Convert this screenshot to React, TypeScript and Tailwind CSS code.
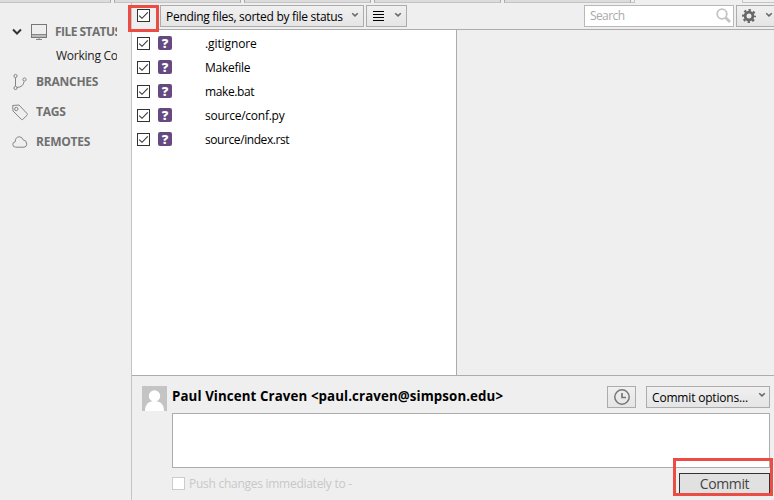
import React from "react";

const files = [
  { name: ".gitignore", tracking: "tracking-[-0.1px]" },
  { name: "Makefile", tracking: "tracking-[-0.25px]" },
  { name: "make.bat", tracking: "tracking-[-0.38px]" },
  { name: "source/conf.py", tracking: "tracking-[-0.25px]" },
  { name: "source/index.rst", tracking: "tracking-[-0.42px]" },
];

function Check() {
  return (
    <svg className="block h-[13px] w-[13px] shrink-0" viewBox="0 0 13 13">
      <rect x=".5" y=".5" width="12" height="12" fill="#fff" stroke="#333" />
      <path d="M2.2 6.6 5 9.3 10.8 3.4" fill="none" stroke="#333" strokeWidth="1.1" />
    </svg>
  );
}

function Chevron({ className = "" }: { className?: string }) {
  return (
    <svg className={`block h-[6px] w-[8px] shrink-0 ${className}`} viewBox="0 0 8 6">
      <path d="M1.2 1.2 4 3.9 6.8 1.2" fill="none" stroke="#686868" strokeWidth="1.5" />
    </svg>
  );
}

function TabStrip() {
  const tab = "h-[3px] border-b border-[#c4c4c4] bg-[#dcdcdc]";
  return (
    <div className="flex h-[3px] shrink-0">
      <div className={`${tab} w-[111px] border-r border-r-[#aaa]`} />
      <div className={`${tab} ml-[3px] w-[127px] border-x border-x-[#aaa]`} />
      <div className={`${tab} ml-[3px] w-[127px] border-x border-x-[#aaa]`} />
      <div className={`${tab} ml-[3px] w-[127px] border-x border-x-[#aaa]`} />
      <div className={`${tab} ml-[3px] w-[127px] border-x border-x-[#aaa]`} />
      <div className="h-[3px] w-[4px] border-b border-r border-[#c4c4c4]" />
      <div className="h-[3px] flex-1" />
      <div className="h-[3px] w-[32px] border-b border-l border-[#c4c4c4]" />
    </div>
  );
}

function Sidebar() {
  const label = "whitespace-nowrap text-[12px] font-bold leading-[16px] text-[#707070]";
  return (
    <div className="h-full w-[131px] shrink-0 overflow-hidden pt-[20px]">
      <div className="flex h-[17px] w-[117px] items-center overflow-hidden">
        <svg className="ml-[12px] h-[8px] w-[10px] shrink-0" viewBox="0 0 10 8">
          <path d="M1 1.5 5 5.5 9 1.5" fill="none" stroke="#333" strokeWidth="2" />
        </svg>
        <svg className="ml-[9px] h-[16px] w-[16px] shrink-0" viewBox="0 0 16 16">
          <rect x=".5" y=".5" width="15" height="13" fill="#eee" stroke="#777" />
          <path d="M1 11H15V13H1Z" fill="#bbb" />
          <path d="M1 10.5H15M5 15.5H11M8 13V15" stroke="#888" fill="none" />
        </svg>
        <span className={`${label} ml-[8px] tracking-[-0.55px]`}>FILE STATUS</span>
      </div>
      <div className="mt-[8px] h-[16px] w-[117px] overflow-hidden whitespace-nowrap pl-[56px] text-[12px] leading-[16px] tracking-[-0.25px] text-[#222]">Working Copy</div>
      <div className="mt-[8px] flex h-[20px] items-center">
        <svg className="ml-[12px] h-[18px] w-[16px] shrink-0" viewBox="0 0 16 18" fill="none" stroke="#858585">
          <circle cx="3.5" cy="3" r="1.6" /><circle cx="3.5" cy="15" r="1.6" /><circle cx="12.5" cy="6.5" r="1.6" />
          <path d="M3.5 5V13M5 14.5Q11.5 14 12 8.5" />
        </svg>
        <span className={`${label} ml-[8px] tracking-[-0.25px]`}>BRANCHES</span>
      </div>
      <div className="mt-[10px] flex h-[20px] items-center">
        <svg className="ml-[12px] h-[17px] w-[16px] shrink-0" viewBox="0 0 16 17" fill="none" stroke="#858585">
          <path d="M.7 1.5 7 1 15 9.5Q15.8 10.5 15 11.3L10.7 15.5Q10 16 9.2 15.2L1 7Z" /><circle cx="4.3" cy="5" r="1.7" />
        </svg>
        <span className={`${label} ml-[8px] tracking-[-0.25px]`}>TAGS</span>
      </div>
      <div className="mt-[10px] flex h-[20px] items-center">
        <svg className="ml-[12px] h-[12px] w-[16px] shrink-0" viewBox="0 0 16 12" fill="none" stroke="#858585">
          <path d="M3.6 11.2Q.8 11 .8 8.4.8 6.1 3.2 5.8 3.2 1 7.3.8 10.3.8 11 3.7 14.5 4 14.8 8.2 14.6 11 12 11.2Z" />
        </svg>
        <span className={`${label} ml-[8px] tracking-[-0.25px]`}>REMOTES</span>
      </div>
    </div>
  );
}

function Toolbar() {
  const button = "flex h-[22px] items-center border border-[#acacac] bg-gradient-to-b from-[#f0f0f0] to-[#e5e5e5]";
  return (
    <div className="relative flex h-[27px] shrink-0 border-b border-[#acacac] pt-[2px]">
      <div className="absolute left-[-4px] top-[2px] h-[27px] w-[31px] border-[3px] border-[#eb4d45]" />
      <div className="ml-[5px] mt-[4px]"><Check /></div>
      <div className={`${button} ml-[10px] w-[204px] pl-[5px]`}>
        <span className="w-[185px] whitespace-nowrap pt-px text-[12px] leading-[16px] tracking-[-0.29px] text-black">Pending files, sorted by file status</span>
        <Chevron className="mb-[2px]" />
      </div>
      <div className={`${button} ml-[2px] w-[41px] pl-[6px]`}>
        <div className="flex w-[11px] flex-col gap-[2px]">
          <i className="h-px bg-black" /><i className="h-px bg-black" /><i className="h-px bg-black" /><i className="h-px bg-black" />
        </div>
        <Chevron className="mb-[2px] ml-[10px]" />
      </div>
      <div className="ml-auto flex h-[22px] w-[150px] items-center border border-[#b8b8b8] bg-white pl-[5px] pr-[2px]">
        <span className="flex-1 text-[12px] leading-[16px] tracking-[-0.6px] text-[#aaa]">Search</span>
        <svg className="h-[16px] w-[15px]" viewBox="0 0 15 16" fill="none" stroke="#c4c4c4">
          <circle cx="6" cy="6" r="4.8" strokeWidth="1.8" /><path d="M9.5 9.6 14 14" strokeWidth="2.8" />
        </svg>
      </div>
      <div className={`${button} ml-[2px] w-[38px] border-r-0 pl-[5px]`}>
        <svg className="h-[14px] w-[14px]" viewBox="0 0 14 14" fill="none" stroke="#666">
          <circle cx="7" cy="7" r="3.9" strokeWidth="2.8" />
          <circle cx="7" cy="7" r="6" strokeWidth="2" strokeDasharray="2.36 2.35" strokeDashoffset="1.18" />
        </svg>
        <Chevron className="mb-[2px] ml-[9px]" />
      </div>
    </div>
  );
}

function CommitPanel() {
  return (
    <div className="relative h-[125px] shrink-0 border-t border-[#acacac]">
      <div className="flex h-[37px] pt-[10px]">
        <svg className="ml-[10px] h-[25px] w-[25px] shrink-0" viewBox="0 0 25 25">
          <path fill="#c4c4c4" d="M0 0H25V25H0Z" />
          <circle cx="12.5" cy="10" r="5.7" fill="#fff" />
          <path d="M3 25C3 18.5 6.5 15 12.5 15S22 18.5 22 25Z" fill="#fff" />
        </svg>
        <span className="ml-[5px] whitespace-nowrap text-[13.3px] font-bold leading-[20px] tracking-[0.1px] text-black">Paul Vincent Craven &lt;paul.craven@simpson.edu&gt;</span>
        <div className="ml-auto flex h-[22px] w-[29px] items-center justify-center border border-[#acacac] bg-gradient-to-b from-[#f0f0f0] to-[#e5e5e5]">
          <svg className="h-[16px] w-[16px]" viewBox="0 0 16 16" fill="none" stroke="#777"><circle cx="8" cy="8" r="7.2" strokeWidth="1.5" /><path d="M8 4V8.5H12" strokeWidth="1.7" /></svg>
        </div>
        <div className="ml-[10px] mr-[4px] flex h-[22px] w-[124px] items-center border border-[#acacac] bg-gradient-to-b from-[#f0f0f0] to-[#e5e5e5] pl-[5px]">
          <span className="w-[106px] whitespace-nowrap pt-px text-[12px] leading-[16px] tracking-[-0.18px] text-black">Commit options...</span><Chevron className="mb-[4px]" />
        </div>
      </div>
      <div className="ml-[40px] h-[55px] w-[598px] border border-[#acacac] bg-white" />
      <div className="flex">
        <div className="ml-[40px] mt-[9px] h-[13px] w-[13px] border border-[#ccc] bg-white" />
        <span className="ml-[4px] mt-[8px] whitespace-nowrap text-[12px] leading-[16px] tracking-[-0.27px] text-[#c8c8c8]">Push changes immediately to -</span>
        <div className="ml-auto mr-[4px] mt-[5px] h-[22px] w-[91px] border border-[#333] bg-[#e1e1e1] text-center text-[14px] leading-[20px] tracking-[-0.4px] text-[#444]">Commit</div>
      </div>
      <div className="absolute left-[541px] top-[82px] h-[38px] w-[100px] border-[3px] border-[#eb4d45]" />
    </div>
  );
}

export default function App() {
  return (
    <div className="flex h-[500px] w-[774px] flex-col overflow-hidden bg-[#efefef] font-['Open_Sans','Noto_Sans',sans-serif]">
      <TabStrip />
      <div className="flex min-h-0 flex-1">
        <Sidebar />
        <div className="flex min-w-0 flex-1 flex-col border-l border-[#c4c4c4]">
          <Toolbar />
          <div className="flex min-h-0 flex-1">
            <div className="w-[325px] border-r border-[#acacac] bg-white pt-px">
              {files.map(({ name, tracking }) => (
                <div key={name} className="flex h-[24px] items-center pl-[5px]">
                  <Check />
                  <div className="ml-[8px] flex h-[14px] w-[14px] items-center justify-center rounded-[2px] bg-[#654982] text-[13px] font-extrabold leading-[14px] text-white">?</div>
                  <span className={`ml-[33px] pt-px text-[12px] leading-[16px] text-black ${tracking}`}>{name}</span>
                </div>
              ))}
            </div>
          </div>
          <CommitPanel />
        </div>
      </div>
    </div>
  );
}
